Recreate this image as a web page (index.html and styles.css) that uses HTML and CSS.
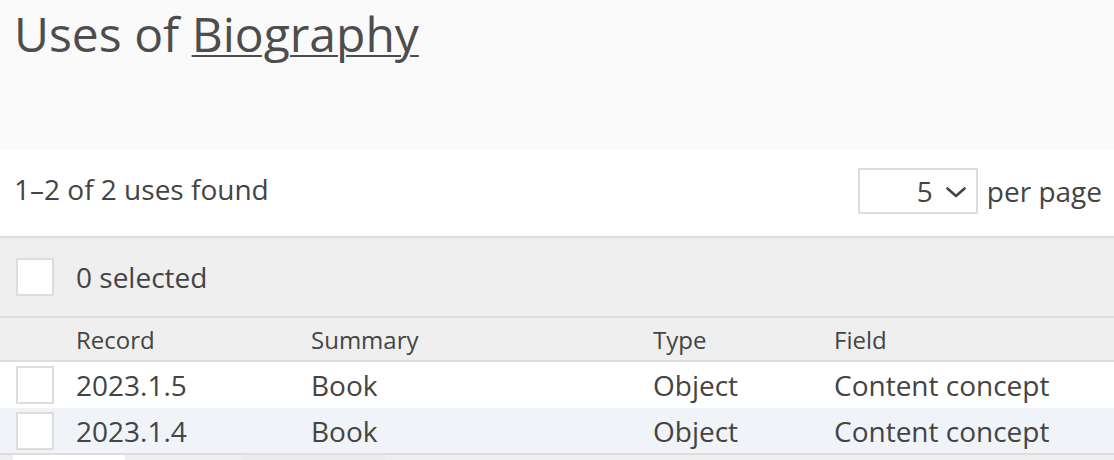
FILE: index.html
```html
<!DOCTYPE html>
<html>
<head>
<meta charset="utf-8">
<link rel="stylesheet" href="styles.css">
</head>
<body>
<header class="title-bar">
  <h1>Uses of <a href="#">Biography</a></h1>
</header>
<div class="summary-bar">
  <span class="count">1–2 of 2 uses found</span>
  <div class="page-size">
    <div class="select">
      <span>5</span>
      <svg width="22" height="12" viewBox="0 0 22 12"><path d="M2.5 2.5 L11 10 L19.5 2.5" fill="none" stroke="#444" stroke-width="2.6" stroke-linecap="round" stroke-linejoin="round"/></svg>
    </div>
    <span>per page</span>
  </div>
</div>
<div class="select-bar">
  <span class="checkbox"></span>
  <span>0 selected</span>
</div>
<div class="table">
  <div class="row head">
    <span class="cell check"></span>
    <span class="cell c1">Record</span>
    <span class="cell c2">Summary</span>
    <span class="cell c3">Type</span>
    <span class="cell c4">Field</span>
  </div>
  <div class="row">
    <span class="cell check"><span class="checkbox"></span></span>
    <span class="cell c1">2023.1.5</span>
    <span class="cell c2">Book</span>
    <span class="cell c3">Object</span>
    <span class="cell c4">Content concept</span>
  </div>
  <div class="row alt">
    <span class="cell check"><span class="checkbox"></span></span>
    <span class="cell c1">2023.1.4</span>
    <span class="cell c2">Book</span>
    <span class="cell c3">Object</span>
    <span class="cell c4">Content concept</span>
  </div>
</div>
<div class="footer">
  <span class="pager-box"></span>
  <span class="pager-shade"></span>
</div>
</body>
</html>
```
FILE: styles.css
```css
* { box-sizing: border-box; }
html, body { margin: 0; padding: 0; }
body {
  font-family: "Open Sans", "Noto Sans", sans-serif;
  color: #444;
  background: #fff;
  width: 1114px;
  height: 460px;
  overflow: hidden;
}
.title-bar {
  background: #fafafa;
  height: 150px;
  padding: 4px 16px 0 14px;
}
.title-bar h1 {
  margin: 0;
  font-weight: 400;
  font-size: 48px;
  line-height: 60px;
  color: #4d4d4d;
}
.title-bar h1 a {
  color: inherit;
  text-decoration: underline;
  text-decoration-thickness: 2px;
  text-underline-offset: 3px;
}
.summary-bar {
  height: 86px;
  display: flex;
  align-items: center;
  justify-content: space-between;
  padding: 0 12px 0 14px;
  font-size: 28px;
}
.count { margin-top: -8px; }
.page-size {
  display: flex;
  align-items: center;
  gap: 9px;
  margin-top: -4px;
}
.select {
  width: 120px;
  height: 46px;
  border: 2px solid #ddd;
  display: flex;
  align-items: center;
  justify-content: flex-end;
  gap: 12px;
  padding-right: 9px;
}
.select svg { margin-top: 2px; }
.select-bar {
  border-top: 2px solid #ddd;
  background: #efefef;
  height: 80px;
  display: flex;
  align-items: center;
  gap: 22px;
  padding: 0 16px;
  font-size: 28px;
}
.checkbox {
  display: inline-block;
  width: 38px;
  height: 38px;
  background: #fff;
  border: 2px solid #ddd;
}
.table {
  border-top: 2px solid #ddd;
  border-bottom: 2px solid #ddd;
}
.row {
  display: flex;
  align-items: center;
  height: 46px;
  font-size: 28px;
  background: #fff;
}
.row.head {
  background: #efefef;
  height: 44px;
  border-bottom: 2px solid #ddd;
  font-size: 24px;
}
.row.alt { background: #f0f3f8; height: 45px; }
.cell { display: block; white-space: nowrap; }
.check { width: 76px; padding-left: 16px; display: flex; align-items: center; }
.c1 { width: 235px; }
.c2 { width: 342px; }
.c3 { width: 181px; }
.c4 { flex: 1; }
.footer {
  background: #eee;
  height: 6px;
  display: flex;
}
.pager-box {
  margin-left: 13px;
  width: 112px;
  height: 6px;
  background: #fff;
}
.pager-shade {
  margin-left: 117px;
  width: 143px;
  height: 6px;
  background: #ebebeb;
}
```
